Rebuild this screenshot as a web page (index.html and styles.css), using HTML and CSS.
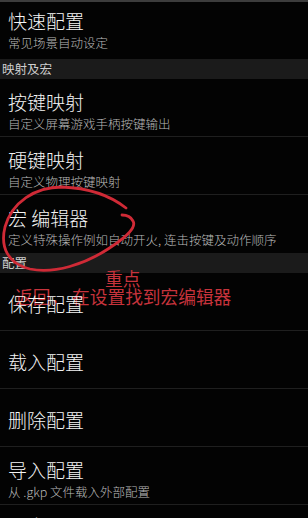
FILE: index.html
```html
<!DOCTYPE html>
<html lang="zh-CN">
<head>
    <meta charset="UTF-8">
    <meta name="viewport" content="width=device-width, initial-scale=1.0">
    <title>设置</title>
    <link rel="stylesheet" href="styles.css">
</head>
<body>
    <div class="screen">
        <div class="item first">
            <div class="title">快速配置</div>
            <div class="summary">常见场景自动设定</div>
        </div>

        <div class="category">映射及宏</div>
        <div class="item">
            <div class="title">按键映射</div>
            <div class="summary">自定义屏幕游戏手柄按键输出</div>
        </div>
        <div class="item">
            <div class="title">硬键映射</div>
            <div class="summary">自定义物理按键映射</div>
        </div>
        <div class="item last">
            <div class="title">宏 编辑器</div>
            <div class="summary">定义特殊操作例如自动开火, 连击按键及动作顺序</div>
        </div>

        <div class="category">配置</div>
        <div class="item single">
            <div class="title above">保存配置</div>
        </div>
        <div class="item single">
            <div class="title">载入配置</div>
        </div>
        <div class="item single">
            <div class="title">删除配置</div>
        </div>
        <div class="item">
            <div class="title">导入配置</div>
            <div class="summary">从 .gkp 文件载入外部配置</div>
        </div>
        <div class="item tail">
            <div class="title">导出配置</div>
        </div>

        <!-- red hand-written notes on top of the screenshot -->
        <div class="notes">
            <svg class="circle" width="308" height="518" viewBox="0 0 308 518">
                <path d="M126,206 C112,195 90,186 62,185 C35,185 12,200 5,225 C0,245 8,262 30,267 C55,272 85,262 108,247 C125,236 137,226 133,219 C131,215 127,213 122,213"
                      fill="none" stroke="#cf2a36" stroke-width="2.8" stroke-linecap="round"/>
            </svg>
            <div class="note note-key">重点</div>
            <div class="note note-back"><span class="back">返回，</span>在设置找到宏编辑器</div>
        </div>
    </div>
</body>
</html>
```

FILE: styles.css
```css
* {
    margin: 0;
    padding: 0;
    box-sizing: border-box;
}

body {
    background-color: #030303;
    font-family: "Noto Sans CJK SC", "Noto Sans", sans-serif;
    color: #f2f2f2;
    overflow: hidden;
}

.screen {
    position: relative;
    width: 308px;
    height: 518px;
    overflow: hidden;
    border-top: 2px solid #3c3c3c;
}

.item {
    padding: 12px 8px 0;
    height: 58px;
    border-bottom: 1px solid #1f1f1f;
}

.item.first {
    height: 57px;
    padding-top: 8px;
    border-bottom: none;
}

.item.last {
    border-bottom: none;
}

.item.single {
    padding-top: 20px;
}

.item.tail {
    padding-top: 10px;
    border-bottom: none;
}

.title {
    font-size: 19px;
    font-weight: 300;
    line-height: 22px;
    color: #f4f4f4;
}

/* the white title sits over the red note in the screenshot */
.title.above {
    position: relative;
    z-index: 2;
}

.summary {
    margin-top: 3px;
    font-size: 12.5px;
    font-weight: 300;
    line-height: 16px;
    color: #b8b8b8;
    white-space: nowrap;
}

.category {
    height: 20px;
    padding-left: 2px;
    background-color: #1b1b1b;
    font-size: 12.5px;
    line-height: 20px;
    color: #cfcfcf;
}

.notes {
    position: absolute;
    top: 0;
    left: 0;
    z-index: 1;
    width: 308px;
    height: 518px;
    pointer-events: none;
}

.circle {
    position: absolute;
    top: 0;
    left: 0;
}

.note {
    position: absolute;
    font-size: 17.7px;
    line-height: 20px;
    color: #c7333c;
    white-space: nowrap;
}

.note-key {
    top: 266px;
    left: 105px;
}

.note-back {
    top: 284px;
    left: 15px;
}

.back {
    margin-right: 4px;
}
```
